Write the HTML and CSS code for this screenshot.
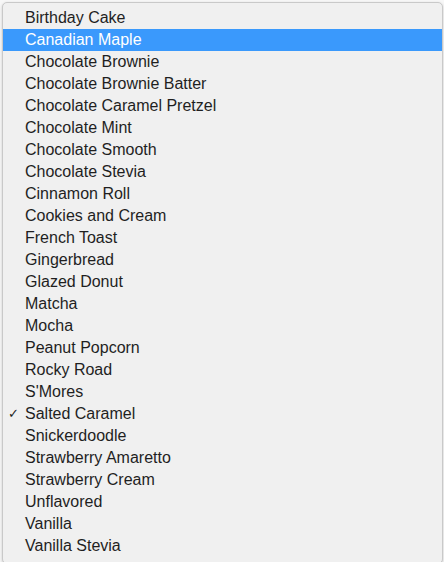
FILE: index.html
```html
<!DOCTYPE html>
<html lang="en">
<head>
    <meta charset="UTF-8">
    <title>Flavor Menu</title>
    <link rel="stylesheet" href="styles.css">
</head>
<body>
    <div class="menu">
        <ul class="menu-list">
            <li class="menu-item">Birthday Cake</li>
            <li class="menu-item selected">Canadian Maple</li>
            <li class="menu-item">Chocolate Brownie</li>
            <li class="menu-item">Chocolate Brownie Batter</li>
            <li class="menu-item">Chocolate Caramel Pretzel</li>
            <li class="menu-item">Chocolate Mint</li>
            <li class="menu-item">Chocolate Smooth</li>
            <li class="menu-item">Chocolate Stevia</li>
            <li class="menu-item">Cinnamon Roll</li>
            <li class="menu-item">Cookies and Cream</li>
            <li class="menu-item">French Toast</li>
            <li class="menu-item">Gingerbread</li>
            <li class="menu-item">Glazed Donut</li>
            <li class="menu-item">Matcha</li>
            <li class="menu-item">Mocha</li>
            <li class="menu-item">Peanut Popcorn</li>
            <li class="menu-item">Rocky Road</li>
            <li class="menu-item">S'Mores</li>
            <li class="menu-item checked">Salted Caramel</li>
            <li class="menu-item">Snickerdoodle</li>
            <li class="menu-item">Strawberry Amaretto</li>
            <li class="menu-item">Strawberry Cream</li>
            <li class="menu-item">Unflavored</li>
            <li class="menu-item">Vanilla</li>
            <li class="menu-item">Vanilla Stevia</li>
        </ul>
    </div>
</body>
</html>
```

FILE: styles.css
```css
body {
    margin: 0;
    padding: 0;
    height: 562px;
    overflow: hidden;
    background-color: #f7f7f7;
    font-family: "Liberation Sans", Arial, sans-serif;
}
.menu {
    margin: 2px 0 0 2px;
    width: 439px;
    height: 556px;
    background-color: #f0f0f0;
    border: 1px solid #c9c9c9;
    border-radius: 5px;
    box-shadow: 0 1px 3px rgba(0, 0, 0, 0.18);
    padding-top: 4px;
}
.menu-list {
    list-style: none;
    margin: 0;
    padding: 0;
}
.menu-item {
    position: relative;
    height: 22px;
    line-height: 22px;
    padding-left: 22px;
    font-size: 16px;
    color: #1f1f1f;
}
.menu-item.selected {
    background-color: #3a99fc;
    color: #ffffff;
}
.menu-item.checked::before {
    content: "\2713";
    position: absolute;
    left: 5px;
    font-family: "DejaVu Sans", sans-serif;
    font-size: 13px;
}
```
